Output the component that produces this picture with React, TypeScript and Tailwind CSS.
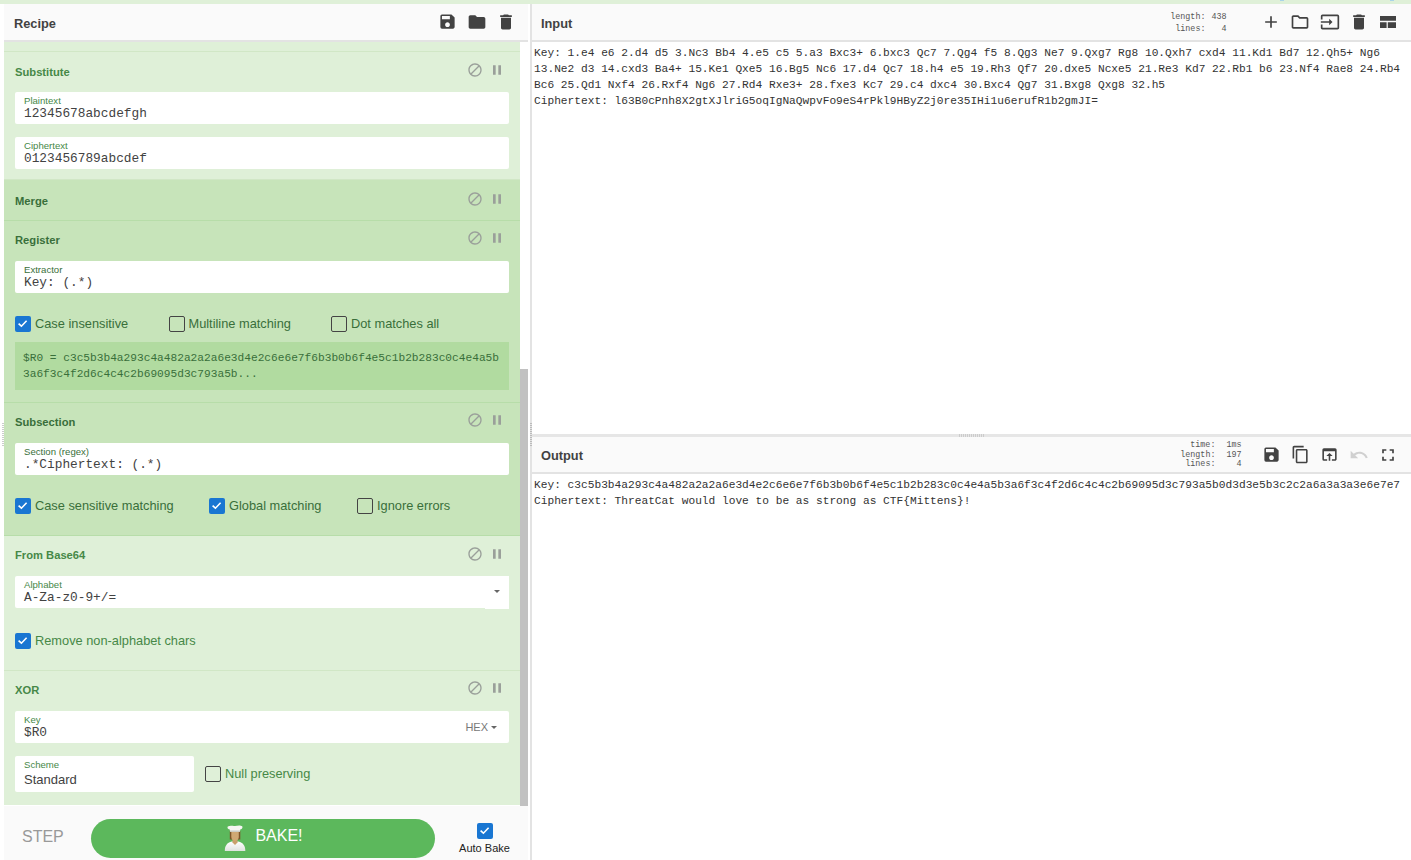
import type { ReactNode } from 'react';
import {
  MdAdd,
  MdBlock,
  MdContentCopy,
  MdDelete,
  MdFolder,
  MdFullscreen,
  MdInput,
  MdOpenInBrowser,
  MdOutlineFolder,
  MdPause,
  MdSave,
  MdUndo,
} from 'react-icons/md';

const sans = "font-['Liberation_Sans',Arial,sans-serif]";
const mono = "font-['Liberation_Mono','Courier_New',monospace]";

const inputLines = [
  'Key: 1.e4 e6 2.d4 d5 3.Nc3 Bb4 4.e5 c5 5.a3 Bxc3+ 6.bxc3 Qc7 7.Qg4 f5 8.Qg3 Ne7 9.Qxg7 Rg8 10.Qxh7 cxd4 11.Kd1 Bd7 12.Qh5+ Ng6',
  '13.Ne2 d3 14.cxd3 Ba4+ 15.Ke1 Qxe5 16.Bg5 Nc6 17.d4 Qc7 18.h4 e5 19.Rh3 Qf7 20.dxe5 Ncxe5 21.Re3 Kd7 22.Rb1 b6 23.Nf4 Rae8 24.Rb4',
  'Bc6 25.Qd1 Nxf4 26.Rxf4 Ng6 27.Rd4 Rxe3+ 28.fxe3 Kc7 29.c4 dxc4 30.Bxc4 Qg7 31.Bxg8 Qxg8 32.h5',
  'Ciphertext: l63B0cPnh8X2gtXJlriG5oqIgNaQwpvFo9eS4rPkl9HByZ2j0re35IHi1u6erufR1b2gmJI=',
];

const outputLines = [
  'Key: c3c5b3b4a293c4a482a2a2a6e3d4e2c6e6e7f6b3b0b6f4e5c1b2b283c0c4e4a5b3a6f3c4f2d6c4c4c2b69095d3c793a5b0d3d3e5b3c2c2a6a3a3a3e6e7e7',
  'Ciphertext: ThreatCat would love to be as strong as CTF{Mittens}!',
];

function Check({ on = false }: { on?: boolean }) {
  if (on) {
    return (
      <span className="flex h-4 w-4 shrink-0 items-center justify-center rounded-[2px] bg-[#1976d2]">
        <svg viewBox="0 0 16 16" className="h-4 w-4" fill="none" stroke="#fff" strokeWidth="1.6">
          <path d="M3.6 7.6 6.4 10.200 11.600 4.800" />
        </svg>
      </span>
    );
  }
  return <span className="h-4 w-4 shrink-0 rounded-[2px] border border-[#444]" />;
}

function CheckLabel({ on, text, className = '' }: { on?: boolean; text: string; className?: string }) {
  return (
    <div className={`flex items-center gap-1 text-[12.8px] leading-4 ${className}`}>
      <Check on={on} />
      <span>{text}</span>
    </div>
  );
}

function Field({ label, value, children }: { label: string; value: string; children?: ReactNode }) {
  return (
    <div className="flex h-8 items-start rounded-[2px] bg-white pl-[9px]">
      <div className="min-w-0 flex-1 pt-1">
        <div className="h-[10px] text-[9.6px] leading-[10px]">{label}</div>
        <div className={`mt-[1px] h-[14px] text-[12.8px] leading-[14px] text-[#424242] ${mono}`}>{value}</div>
      </div>
      {children}
    </div>
  );
}

function OpHead({ title, titleTop, iconTop }: { title: string; titleTop: string; iconTop: string }) {
  return (
    <div className="flex h-10 items-start justify-between">
      <span className={`text-[11.2px] font-bold leading-[13px] ${titleTop}`}>{title}</span>
      <div className={`flex items-center pr-[15px] text-[#9a9f9a] ${iconTop}`}>
        <MdBlock size={16} />
        <MdPause size={16} className="ml-[6px]" />
      </div>
    </div>
  );
}

function Op({ dark, last, children, height }: { dark?: boolean; last?: boolean; children: ReactNode; height: string }) {
  return (
    <div
      className={`pl-[11px] ${height} ${
        dark ? 'bg-[#c7e4ba] text-[#396f3a]' : 'bg-[#dff0d8] text-[#468847]'
      } ${last ? '' : dark ? 'border-b border-[#b7dda9]' : 'border-b border-[#d1e7c6]'}`}
    >
      {children}
    </div>
  );
}

function StatRow({ name, value, gap }: { name: string; value: string; gap: string }) {
  return (
    <tr>
      <td className={`text-right ${gap}`}>{name}</td>
      <td className="text-right">{value}</td>
    </tr>
  );
}

function ToolIcon({ children }: { children: ReactNode }) {
  return <div className="flex w-[29.3px] items-center justify-center">{children}</div>;
}

function LayoutIcon() {
  return (
    <svg viewBox="0 0 16 12" className="h-3 w-4" fill="#424242">
      <path d="M0 0h16v4.800H0zM0 6.300h6.600V12H0zM7.800 6.300H16V12H7.800z" />
    </svg>
  );
}

function ChefIcon() {
  return (
    <svg viewBox="0 0 22 26" className="h-[26px] w-[22px]">
      <defs>
        <linearGradient id="coat" x1="0" x2="0" y1="0" y2="1">
          <stop offset="0" stopColor="#ffffff" />
          <stop offset="1" stopColor="#dfe3df" />
        </linearGradient>
      </defs>
      <path d="M5.800 6h10.500v8.500h-10.500z" fill="#7c5428" />
      <path d="M.800 26c0-5.500 2.200-8.300 7-9.500h6.500c4.800 1.200 7 4 7 9.500z" fill="url(#coat)" />
      <path d="M8.500 13h5v4.500l-2.500 2.500-2.500-2.500z" fill="#c9a06b" />
      <path d="M7.300 6.500h7.500v5.500c0 2.300-1.600 3.800-3.750 3.800S7.300 14.300 7.300 12z" fill="#d0a873" />
      <path d="M3.800 1.500C6 .300 9 1.200 11 .900s5.500-1.100 7.200.400c.800 1.300-.300 2.700-2 3.200l-.200 2.300H6l-.200-2.300C3.800 4.200 3 2.700 3.800 1.500z" fill="#f6f6f3" />
      <path d="M6 5.500h10v1.300H6z" fill="#c9cbc4" />
    </svg>
  );
}

export default function App() {
  return (
    <div className={`flex h-[860px] w-[1411px] flex-col overflow-hidden bg-white ${sans}`}>
      <div className="relative h-1 shrink-0 bg-[#dff0d8]">
        <div className="absolute left-[1280px] top-0 h-[1px] w-1 bg-[#a9d4e8]" />
        <div className="absolute left-[1390px] top-0 h-[1px] w-1 bg-[#a9d4e8]" />
      </div>
      <div className="flex min-h-0 flex-1">
        {/* recipe */}
        <div className="relative ml-1 flex w-[524px] shrink-0 flex-col">
          <div className="flex h-[38px] shrink-0 items-center justify-between border-b-2 border-[#e3e3e3] bg-[#fafafa] pl-[10px] pr-[7px] text-[#424242]">
            <span className="pt-1 text-[12.8px] font-bold">Recipe</span>
            <div className="flex items-center pb-[1px]">
              <ToolIcon><MdSave size={19} /></ToolIcon>
              <ToolIcon><MdFolder size={20} /></ToolIcon>
              <ToolIcon><MdDelete size={20} /></ToolIcon>
            </div>
          </div>
          <div className="flex min-h-0 flex-1">
            <div className="w-[516px] shrink-0">
              <div className="h-[10px] border-b border-[#d1e7c6] bg-[#dff0d8]" />
              <Op height="h-[128px]">
                <OpHead title="Substitute" titleTop="pt-[14px]" iconTop="pt-[10px]" />
                <div className="pr-[11px]">
                  <Field label="Plaintext" value="12345678abcdefgh" />
                  <div className="mt-[13px]">
                    <Field label="Ciphertext" value="0123456789abcdef" />
                  </div>
                </div>
              </Op>
              <Op dark height="h-[41px]">
                <OpHead title="Merge" titleTop="pt-[15px]" iconTop="pt-[11px]" />
              </Op>
              <Op dark height="h-[182px]">
                <OpHead title="Register" titleTop="pt-[13px]" iconTop="pt-[9px]" />
                <div className="pr-[11px]">
                  <Field label="Extractor" value="Key: (.*)" />
                  <div className="mt-[23px] flex">
                    <CheckLabel on text="Case insensitive" className="w-[153.500px]" />
                    <CheckLabel text="Multiline matching" className="w-[162.500px]" />
                    <CheckLabel text="Dot matches all" />
                  </div>
                  <div className={`mt-[10px] h-[48px] bg-[#b1dba0] px-2 pt-2 text-[11.180px] leading-4 ${mono}`}>
                    <div>$R0 = c3c5b3b4a293c4a482a2a2a6e3d4e2c6e6e7f6b3b0b6f4e5c1b2b283c0c4e4a5b</div>
                    <div>3a6f3c4f2d6c4c4c2b69095d3c793a5b...</div>
                  </div>
                </div>
              </Op>
              <Op dark height="h-[133px]">
                <OpHead title="Subsection" titleTop="pt-[13px]" iconTop="pt-[9px]" />
                <div className="pr-[11px]">
                  <Field label="Section (regex)" value=".*Ciphertext: (.*)" />
                  <div className="mt-[23px] flex">
                    <CheckLabel on text="Case sensitive matching" className="w-[194px]" />
                    <CheckLabel on text="Global matching" className="w-[148px]" />
                    <CheckLabel text="Ignore errors" />
                  </div>
                </div>
              </Op>
              <Op height="h-[135px]">
                <OpHead title="From Base64" titleTop="pt-[13px]" iconTop="pt-[10px]" />
                <div className="pr-[11px]">
                  <Field label="Alphabet" value="A-Za-z0-9+/=">
                    <div className="flex h-[33px] w-6 items-center justify-center bg-white pb-[3px]">
                      <span className="h-0 w-0 border-x-[3px] border-t-[3px] border-x-transparent border-t-[#666]" />
                    </div>
                  </Field>
                  <CheckLabel on text="Remove non-alphabet chars" className="mt-[25px]" />
                </div>
              </Op>
              <Op last height="h-[134px]">
                <OpHead title="XOR" titleTop="pt-[13px]" iconTop="pt-[9px]" />
                <div className="pr-[11px]">
                  <Field label="Key" value="$R0">
                    <div className="flex h-8 items-center gap-[3px] pr-3 text-[11px] text-[#777]">
                      HEX
                      <span className="h-0 w-0 border-x-[3px] border-t-[3px] border-x-transparent border-t-[#666]" />
                    </div>
                  </Field>
                  <div className="mt-[13px] flex items-center">
                    <div className="h-9 w-[179px] rounded-[2px] bg-white pl-[9px] pt-[4px]">
                      <div className="text-[9.6px] leading-[10px]">Scheme</div>
                      <div className="mt-[2px] text-[13px] leading-[15px] text-[#424242]">Standard</div>
                    </div>
                    <CheckLabel text="Null preserving" className="ml-[11px]" />
                  </div>
                </div>
              </Op>
            </div>
            <div className="w-2 shrink-0 bg-white">
              <div className="mt-[327px] h-[438px] bg-[#c1c1c1]" />
            </div>
          </div>
          <div className="flex h-[54px] shrink-0 items-center bg-[#fafafa] pl-[18px]">
            <span className="w-[69px] pt-2 text-[16px] text-[#999]">STEP</span>
            <div className="mt-[10px] flex h-[39px] w-[344px] items-center justify-center gap-[9px] rounded-full bg-[#5cb85c] pl-[1px] text-[16px] text-white">
              <ChefIcon />
              <span className="pb-[5px]">BAKE!</span>
            </div>
            <div className="ml-6 flex w-[51px] flex-col items-center pt-[13px]">
              <Check on />
              <span className="mt-[1px] whitespace-nowrap text-[11px] leading-[16px] text-[#222]">Auto Bake</span>
            </div>
          </div>
          <div className="absolute -left-[2px] top-[419px] h-6 w-[2px] bg-[repeating-linear-gradient(#ccc_0,#ccc_1px,transparent_1px,transparent_2px)]" />
        </div>

        {/* input and output */}
        <div className="relative ml-[2px] flex min-w-0 flex-1 flex-col border-l-2 border-[#e3e3e3]">
          <div className="flex h-[38px] shrink-0 items-center border-b-2 border-[#e3e3e3] bg-[#fafafa] pl-[9px] text-[#424242]">
            <span className="flex-1 pt-1 text-[12.8px] font-bold">Input</span>
            <table className={`mr-[30px] mt-[2px] text-[8.400px] leading-[12px] text-[#555] ${mono}`}>
              <tbody>
                <StatRow name="length:" value="438" gap="pr-[6px]" />
                <StatRow name="lines:" value="4" gap="pr-[6px]" />
              </tbody>
            </table>
            <div className="flex items-center pr-[8px]">
              <ToolIcon><MdAdd size={20} /></ToolIcon>
              <ToolIcon><MdOutlineFolder size={20} /></ToolIcon>
              <ToolIcon><MdInput size={20} /></ToolIcon>
              <ToolIcon><MdDelete size={20} /></ToolIcon>
              <ToolIcon><LayoutIcon /></ToolIcon>
            </div>
          </div>
          <div className={`h-[392px] shrink-0 whitespace-pre pl-[2px] pt-[3px] text-[11.2px] leading-4 text-[#333] ${mono}`}>
            {inputLines.map((line) => (
              <div key={line}>{line}</div>
            ))}
          </div>
          <div className="h-[3px] shrink-0 bg-[#e6e6e6]" />
          <div className="flex h-[37px] shrink-0 items-center border-b-2 border-[#e3e3e3] bg-[#fafafa] pl-[9px] text-[#424242]">
            <span className="flex-1 pt-[2px] text-[12.8px] font-bold">Output</span>
            <table className={`mr-[15px] mt-[2px] text-[8.400px] leading-[9.500px] text-[#555] ${mono}`}>
              <tbody>
                <StatRow name="time:" value="1ms" gap="pr-[11px]" />
                <StatRow name="length:" value="197" gap="pr-[11px]" />
                <StatRow name="lines:" value="4" gap="pr-[11px]" />
              </tbody>
            </table>
            <div className="flex items-center pr-[8px]">
              <ToolIcon><MdSave size={19} /></ToolIcon>
              <ToolIcon><MdContentCopy size={19} /></ToolIcon>
              <ToolIcon><MdOpenInBrowser size={19} /></ToolIcon>
              <ToolIcon><MdUndo size={20} className="text-[#d0d0d0]" /></ToolIcon>
              <ToolIcon><MdFullscreen size={20} /></ToolIcon>
            </div>
          </div>
          <div className={`flex-1 whitespace-pre pl-[2px] pt-[3px] text-[11.2px] leading-4 text-[#333] ${mono}`}>
            {outputLines.map((line) => (
              <div key={line}>{line}</div>
            ))}
          </div>
          <div className="absolute left-[427px] top-[430px] h-[3px] w-[26px] bg-[repeating-linear-gradient(90deg,#ccc_0,#ccc_1px,transparent_1px,transparent_2px)]" />
          <div className="absolute -left-[2px] top-[419px] h-6 w-[2px] bg-[repeating-linear-gradient(#bbb_0,#bbb_1px,transparent_1px,transparent_2px)]" />
        </div>
      </div>
    </div>
  );
}
